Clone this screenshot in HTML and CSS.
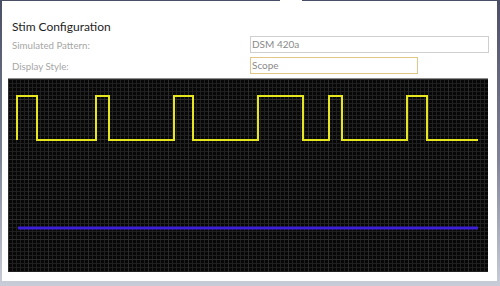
FILE: index.html
```html
<!DOCTYPE html>
<html>
<head>
<meta charset="utf-8">
<link rel="stylesheet" href="styles.css">
</head>
<body>
<div class="panel">
  <h1 class="title">Stim Configuration</h1>
  <div class="form">
    <span class="label">Simulated Pattern:</span>
    <div class="input wide">DSM 420a</div>
    <span class="label">Display Style:</span>
    <div class="input narrow focus">Scope</div>
  </div>
  <div class="scope">
    <svg class="trace" width="480" height="193" viewBox="0 0 480 193">
      <polyline class="yellow" points="9,61 9,17 29,17 29,61 88,61 88,17 101,17 101,61 166,61 166,17 185,17 185,61 250,61 250,17 295,17 295,61 321,61 321,17 334,17 334,61 399,61 399,17 419,17 419,61 470,61"/>
      <line class="blue" x1="10" y1="149" x2="470" y2="149"/>
    </svg>
  </div>
</div>
</body>
</html>
```
FILE: styles.css
```css
html, body {
  margin: 0;
  padding: 0;
}
body {
  width: 500px;
  height: 286px;
  overflow: hidden;
  background: linear-gradient(to bottom, #4a4f66 0%, #7d8296 55%, #c9cdd8 100%);
  font-family: Lato, "Open Sans", sans-serif;
}
.panel {
  position: relative;
  margin: 1px 3px 0 2px;
  height: 280px;
  background: #fff;
  box-sizing: border-box;
  padding: 18px 0 0 0;
}
.panel::before {
  content: "";
  position: absolute;
  left: 278px;
  top: -1px;
  width: 22px;
  height: 1px;
  background: #fff;
}
.title {
  margin: 0 0 1px 10px;
  font-size: 12px;
  line-height: 16px;
  font-weight: 400;
  color: #1e1e1e;
}
.form {
  display: grid;
  grid-template-columns: 238px auto;
  row-gap: 4px;
  align-items: center;
  margin-left: 10px;
}
.label {
  font-size: 9.7px;
  color: #a6a6a6;
  line-height: 14px;
}
.input {
  box-sizing: border-box;
  height: 17px;
  border: 1px solid #cfcfcf;
  font-size: 10px;
  line-height: 15px;
  padding-left: 1px;
  color: #8a8a8a;
}
.input.wide { width: 239px; }
.input.narrow { width: 168px; }
.input.focus { border-color: #e2c68a; }
.scope {
  margin: 4px 0 0 6px;
  width: 480px;
  height: 193px;
  border-top: 1px solid #8c8c8c;
  background-color: #070707;
  background-image:
    linear-gradient(#2c2c2c 1px, transparent 1px),
    linear-gradient(90deg, #2c2c2c 1px, transparent 1px),
    linear-gradient(#202020 1px, transparent 1px),
    linear-gradient(90deg, #202020 1px, transparent 1px);
  background-size: 20px 20px, 20px 20px, 4px 4px, 4px 4px;
}
.trace {
  display: block;
}
.yellow {
  fill: none;
  stroke: #e6e61e;
  stroke-width: 2;
}
.blue {
  stroke: #3d1fd6;
  stroke-width: 3;
}
```
